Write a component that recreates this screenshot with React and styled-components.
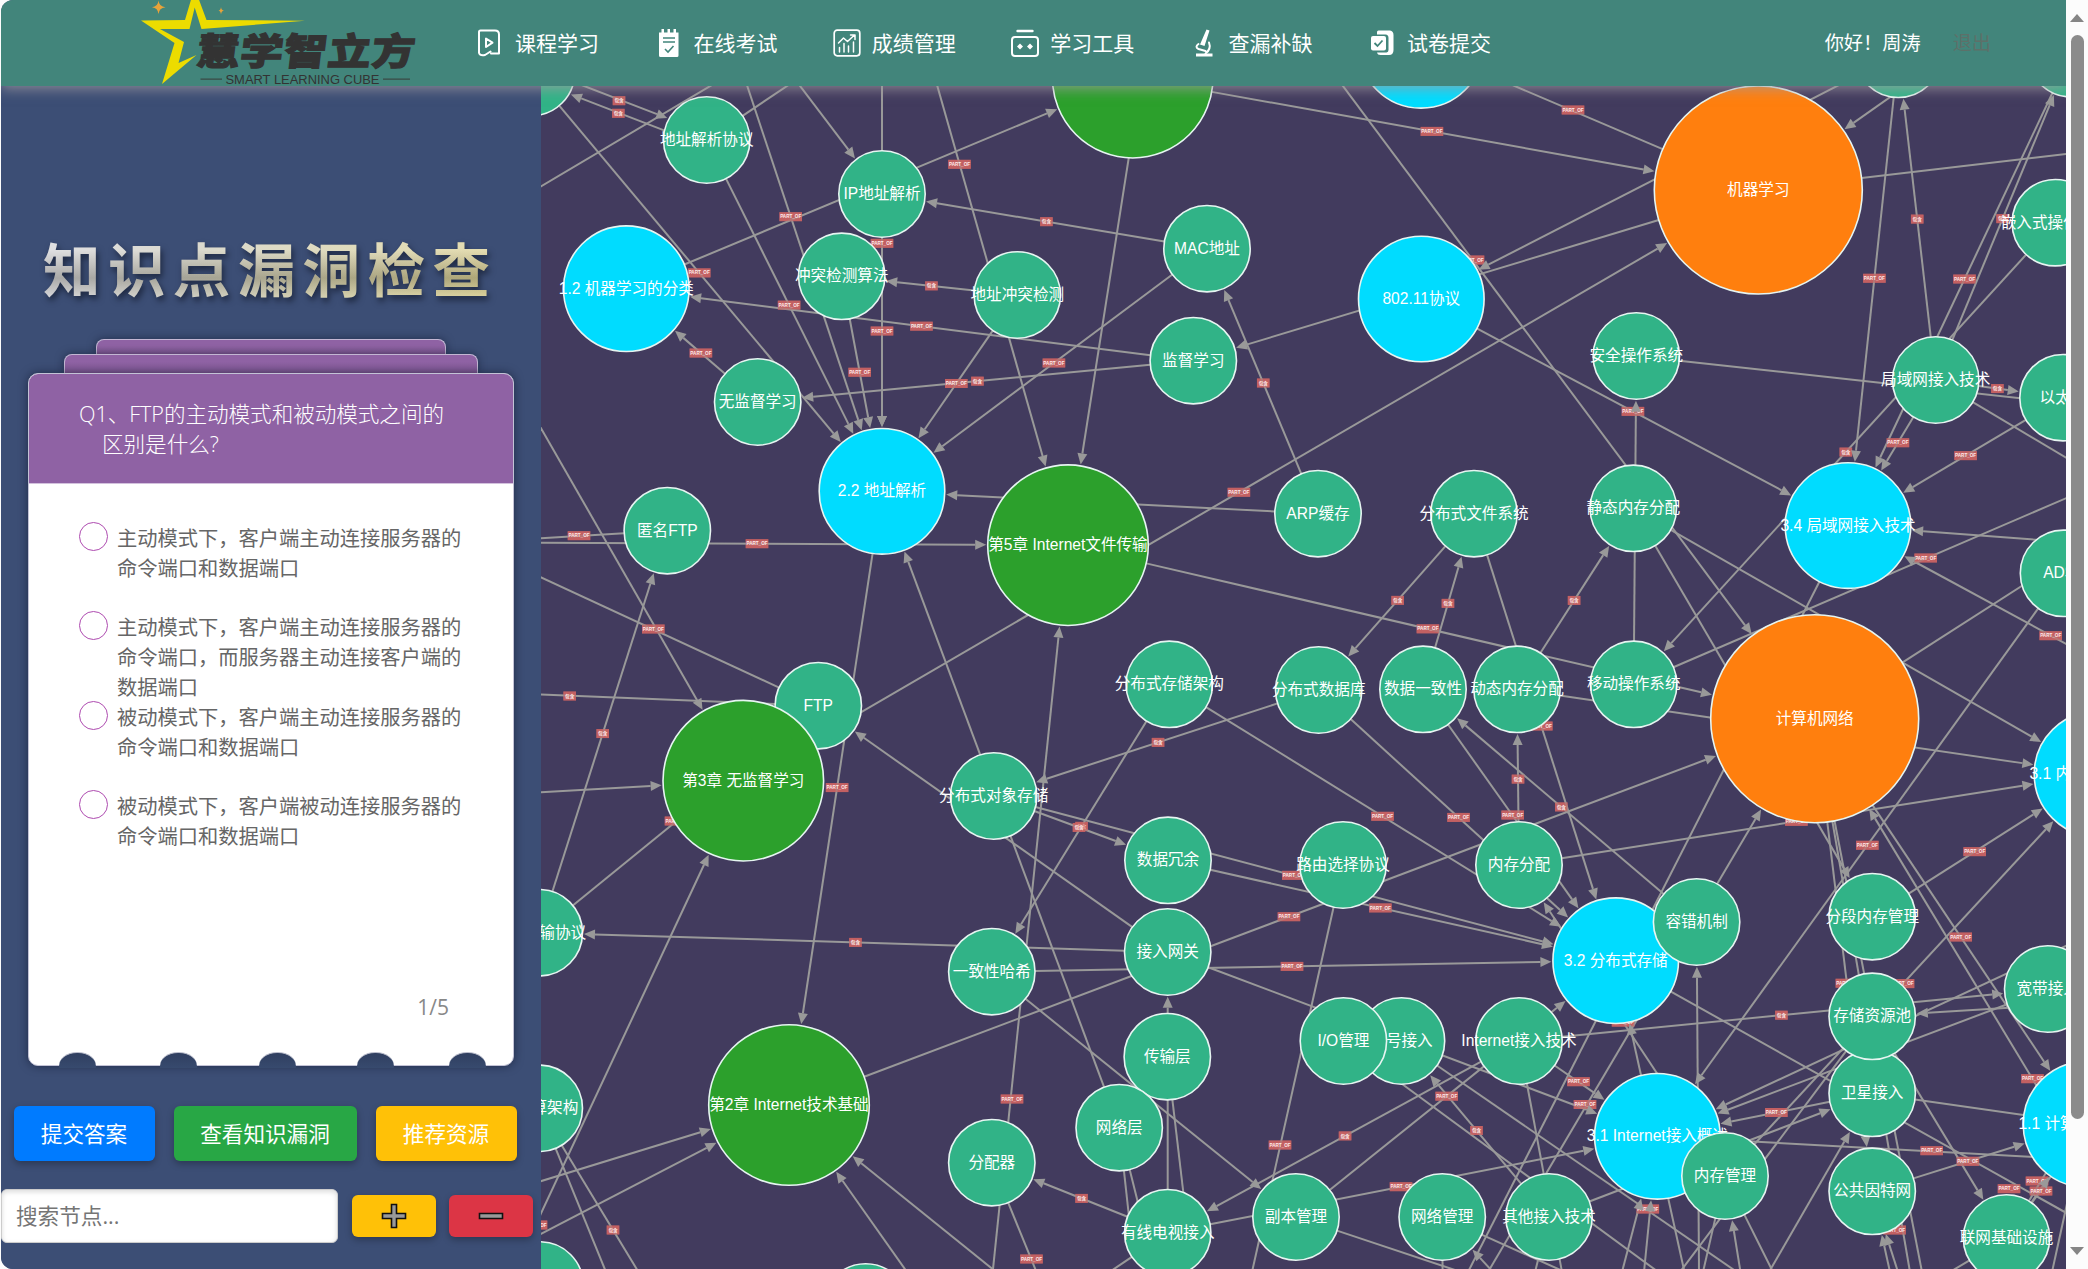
import React from 'react';
import styled, { createGlobalStyle } from 'styled-components';

const SANS = '"Open Sans", "Noto Sans CJK SC", sans-serif';
const GRAPH_FONT = '"Liberation Sans", "Noto Sans CJK SC", sans-serif';

const Global = createGlobalStyle`
  * { box-sizing: border-box; }
  html, body { margin: 0; padding: 0; background: #fcfcfc; overflow: hidden; }
  body { font-family: ${SANS}; }
`;

const Page = styled.div`
  display: flex;
  width: 2088px;
  height: 1269px;
  padding-left: 1px;
  background: #fcfcfc;
`;

const Shell = styled.div`
  display: flex;
  flex-direction: column;
  width: 2065px;
  height: 1269px;
  border-radius: 12px 0 0 12px;
  overflow: hidden;
  background: #3c4e75;
`;

/* ---------- header ---------- */

const Header = styled.header`
  position: relative;
  z-index: 2;
  display: flex;
  align-items: center;
  flex: none;
  height: 86px;
  padding-right: 75px;
  background: #42857b;
  box-shadow: 0 3px 12px rgba(160, 155, 160, 0.75);
`;

const LogoArt = styled.svg`
  display: block;
  flex: none;
  width: 285px;
  height: 86px;
  margin-left: 139px;
`;

const Nav = styled.nav`
  display: flex;
  align-items: center;
  gap: 55.4px;
  margin-left: 51px;
  flex: 1;
`;

const NavItem = styled.a`
  display: flex;
  align-items: center;
  gap: 11px;
  width: 123px;
  color: #fff;
  font-size: 21px;
  line-height: 30px;
  white-space: nowrap;

  svg { display: block; flex: none; width: 28px; height: 28px; }
`;

const Account = styled.div`
  display: flex;
  gap: 32px;
  font-size: 19.2px;
  line-height: 30px;
  color: #fff;
`;

const Logout = styled.span`
  color: #5d7069;
`;

/* ---------- layout ---------- */

const Body = styled.div`
  display: flex;
  flex: 1;
  min-height: 0;
`;

const Side = styled.aside`
  display: flex;
  flex-direction: column;
  flex: none;
  width: 540px;
  background: #3c4e75;
`;

const Title = styled.h1`
  margin: 144px 0 0 42px;
  height: 80px;
  font-size: 57.5px;
  line-height: 80px;
  font-weight: 700;
  letter-spacing: 7.4px;
  white-space: nowrap;
  color: transparent;
  background:
    linear-gradient(180deg, rgba(255,255,255,.3) 25%, rgba(80,78,68,.3) 60%, rgba(255,255,255,.15) 85%),
    linear-gradient(90deg, #d2d2d6 0%, #cbc9ba 30%, #d2cca2 60%, #dacd86 100%);
  -webkit-background-clip: text;
  background-clip: text;
  filter: drop-shadow(2px 4px 3px rgba(10, 15, 30, 0.6));
`;

const Deck = styled.div`
  display: flex;
  flex-direction: column;
  align-items: center;
  width: 486px;
  margin: 29px 0 0 27px;
`;

const BackCard = styled.div`
  width: ${(p) => p.$w}px;
  height: ${(p) => p.$h}px;
  background: linear-gradient(#8f62a4 40%, #7f5893);
  border: 1px solid #c3b6d3;
  border-bottom: 0;
  border-radius: 8px 8px 0 0;
  box-shadow: 0 0 9px rgba(10, 15, 35, 0.5);
`;

const Card = styled.section`
  display: flex;
  flex-direction: column;
  width: 486px;
  height: 693px;
  border: 1px solid #c3c3d6;
  border-radius: 10px;
  background: #fff;
  box-shadow: 0 0 10px rgba(10, 15, 35, 0.55);
  position: relative;
`;

const Question = styled.div`
  flex: none;
  height: 110px;
  padding: 25px 20px 0 73px;
  background: #8f62a4;
  border-bottom: 1px solid #d3c1dd;
  border-radius: 9px 9px 0 0;
  color: #fff;
  font-size: 21.6px;
  line-height: 30px;
  font-weight: 300;
  text-indent: -23px;
  white-space: pre-line;
  letter-spacing: -0.05px;
`;

const Options = styled.div`
  display: flex;
  flex-direction: column;
  padding: 38px 0 0 50px;
`;

const Option = styled.label`
  display: flex;
  gap: 9px;
  height: 89.3px;
  color: #666;
  font-size: 20.25px;
  line-height: 30px;
`;

const Radio = styled.i`
  flex: none;
  width: 29px;
  height: 29px;
  border: 1.4px solid #ae4bb0;
  border-radius: 50%;
`;

const OptionText = styled.span`
  width: 346px;
  padding-top: 1px;
  white-space: pre;
`;

const Pager = styled.div`
  margin: 113px 64px 0 0;
  text-align: right;
  font-size: 21px;
  line-height: 30px;
  color: #888;
`;

const Notches = styled.div`
  position: absolute;
  left: 30px;
  bottom: -3px;
  display: flex;
`;

const Notch = styled.i`
  width: 37px;
  height: 16px;
  margin-right: ${(p) => p.$gap}px;
  border-radius: 18px 18px 0 0 / 14px 14px 0 0;
  border-top: 1px solid #b9bccb;
  background: linear-gradient(#303f60, #374a6e);
`;

const Actions = styled.div`
  display: flex;
  gap: 19px;
  margin: 40px 0 0 12.5px;
`;

const ActionButton = styled.button`
  width: ${(p) => p.$w}px;
  height: 55px;
  padding: 0;
  border: 0;
  border-radius: 6px;
  background: ${(p) => p.$bg};
  color: #fff;
  font: 400 21.6px/30px ${SANS};
  white-space: nowrap;
  box-shadow: 0 3px 7px rgba(0, 0, 0, 0.28);
`;

const SearchRow = styled.div`
  display: flex;
  align-items: center;
  margin-top: 28px;
  height: 54px;
`;

const SearchInput = styled.input`
  width: 337px;
  height: 54px;
  padding: 0 14px 2px;
  border: 1px solid #ccc;
  border-radius: 6px;
  background: #fff;
  box-shadow: inset 0 2px 5px rgba(0, 0, 0, 0.14);
  font: 400 21.6px/30px ${SANS};
  color: #333;
  &::placeholder { color: #757575; opacity: 1; }
`;

const ZoomButton = styled.button`
  display: flex;
  align-items: center;
  justify-content: center;
  width: 84px;
  height: 42px;
  margin-left: ${(p) => p.$ml}px;
  padding: 0;
  border: 0;
  border-radius: 6px;
  background: ${(p) => p.$bg};
  box-shadow: 0 3px 7px rgba(0, 0, 0, 0.28);
`;

const GraphArea = styled.main`
  flex: 1;
  overflow: hidden;
  background: #423b5e;
`;

const GraphSvg = styled.svg`
  display: block;
  width: 1525px;
  height: 1183px;
  font-family: ${GRAPH_FONT};
`;

/* ---------- scrollbar ---------- */

const ScrollTrack = styled.div`
  display: flex;
  flex-direction: column;
  align-items: center;
  width: 22px;
  height: 1269px;
  padding: 14px 0 14px;
  background: #fcfcfc;
`;

const ScrollArrow = styled.i`
  border: 7px solid transparent;
  border-top-width: ${(p) => (p.$up ? 0 : 8)}px;
  border-bottom-width: ${(p) => (p.$up ? 8 : 0)}px;
  border-${(p) => (p.$up ? 'bottom' : 'top')}-color: #858585;
`;

const ScrollThumb = styled.i`
  width: 13px;
  height: 1084px;
  margin: 13px 0 auto;
  border-radius: 7px;
  background: #8b8b8b;
`;

/* ---------- graph data ---------- */

const S = 43.2, C = 62.8, G = 80.3, O = 104;
const TEAL = '#31b387', CYAN = '#00dcff', GREEN = '#2ca02c', ORANGE = '#ff7f0e';
const FILL = { [S]: TEAL, [C]: CYAN, [G]: GREEN, [O]: ORANGE };

const nodes = {
  tl: [531.5, 72.5, S, ''],
  arpProto: [706.7, 140, S, '地址解析协议'],
  ipRes: [882, 194, S, 'IP地址解析'],
  c12: [626.3, 288.7, C, '1.2 机器学习的分类'],
  clashAlgo: [841.7, 276.3, S, '冲突检测算法'],
  clash: [1017.3, 295, S, '地址冲突检测'],
  unsup: [757.7, 402, S, '无监督学习'],
  c22: [882, 491.3, C, '2.2 地址解析'],
  anonFtp: [667.3, 530.7, S, '匿名FTP'],
  ftp: [818.3, 705.7, S, 'FTP'],
  ch3: [743.3, 780.7, G, '第3章 无监督学习'],
  objStore: [993.7, 796, S, '分布式对象存储'],
  ch5: [1068, 545.2, G, '第5章 Internet文件传输'],
  chTop: [1132.7, 77.7, G, ''],
  mac: [1207, 248.7, S, 'MAC地址'],
  sup: [1193.3, 360.7, S, '监督学习'],
  w80211: [1421.3, 299, C, '802.11协议'],
  cTop: [1421, 45.3, C, ''],
  ml: [1758.3, 190, O, '机器学习'],
  sTop: [1898.3, 54.3, S, ''],
  tr: [2071, 53.7, S, ''],
  embedOs: [2055.3, 222.7, S, '嵌入式操作系统'],
  safeOs: [1636.3, 356, S, '安全操作系统'],
  lan: [1935.7, 380, S, '局域网接入技术'],
  ether: [2063, 397.7, S, '以太网'],
  c34: [1848, 525.6, C, '3.4 局域网接入技术'],
  arp: [1318, 513.7, S, 'ARP缓存'],
  dfs: [1474, 513.7, S, '分布式文件系统'],
  dArch: [1169.3, 684.3, S, '分布式存储架构'],
  ddb: [1318.7, 690, S, '分布式数据库'],
  consist: [1423, 689.3, S, '数据一致性'],
  dynMem: [1517, 689.3, S, '动态内存分配'],
  redund: [1168, 860.3, S, '数据冗余'],
  route: [1343, 865, S, '路由选择协议'],
  memAlloc: [1519, 865, S, '内存分配'],
  staMem: [1633.3, 508.3, S, '静态内存分配'],
  mobOs: [1633.7, 684.3, S, '移动操作系统'],
  net: [1814.7, 718.7, O, '计算机网络'],
  adsl: [2063.5, 573.3, S, 'ADSL'],
  c31m: [2097, 774, C, '3.1 内存管理的概念'],
  ftProto: [539.3, 932.7, S, '文件传输协议'],
  cloudArch: [539.3, 1108.3, S, '云计算架构'],
  bl: [540, 1285, S, ''],
  ch2: [789, 1105, G, '第2章 Internet技术基础'],
  bs: [865.7, 1307, S, ''],
  hash: [991.8, 971.7, S, '一致性哈希'],
  gateway: [1167.7, 952, S, '接入网关'],
  transport: [1167.3, 1056.7, S, '传输层'],
  netLayer: [1119.2, 1127.7, S, '网络层'],
  splitter: [991.8, 1162.7, S, '分配器'],
  cable: [1167.7, 1232.7, S, '有线电视接入'],
  replica: [1296, 1217, S, '副本管理'],
  netMgr: [1442.2, 1217, S, '网络管理'],
  other: [1549, 1217, S, '其他接入技术'],
  c32: [1615.7, 960.7, C, '3.2 分布式存储'],
  fault: [1696.6, 922, S, '容错机制'],
  c31i: [1657.4, 1136.3, C, '3.1 Internet接入概述'],
  memMgr: [1725, 1176, S, '内存管理'],
  dial: [1401.5, 1041, S, '拨号接入'],
  io: [1343.4, 1041, S, 'I/O管理'],
  inetAcc: [1519, 1041, S, 'Internet接入技术'],
  segMem: [1872.2, 916.7, S, '分段内存管理'],
  sat: [1872.2, 1093.3, S, '卫星接入'],
  pool: [1872.2, 1016.3, S, '存储资源池'],
  pubNet: [1872.2, 1191.3, S, '公共因特网'],
  broad: [2047.7, 989, S, '宽带接入'],
  infra: [2006.5, 1238, S, '联网基础设施'],
  c11: [2086, 1124.3, C, '1.1 计算机网络概述'],
};
/* chapter 3 sits above the FTP node */
const order = Object.keys(nodes).filter((k) => k !== 'ch3');
order.splice(order.indexOf('ftp') + 1, 0, 'ch3');

const P = 'PART_OF';
const R = '包含';

/* [from, to, label, label position, bend] – a bare [x, y] end lies outside the visible nodes */
const edges = [
  ['tl', 'arpProto', R, [619, 100.7], -10],
  ['arpProto', 'tl', R, [618.3, 113.3], -10],
  [[540, 187], [712, 85]],
  ['arpProto', [790, 84]],
  [[699.4, -58], 'c22', P, [790.7, 216.7]],
  [[750, 20], 'ipRes'],
  [[882, 0], 'c22', P, [882, 243.3]],
  ['ipRes', 'c22', P, [882, 331]],
  [[910, -10], 'ch5', P, [959.5, 164.3]],
  ['mac', 'ipRes', R],
  ['tl', 'c22', P],
  ['arpProto', 'c22', P],
  ['clashAlgo', 'c22', P],
  ['clash', 'clashAlgo', R],
  ['clash', 'c22', P],
  ['c12', 'chTop'],
  ['sup', 'c12', P],
  ['unsup', 'c12', P],
  ['sup', 'unsup', R],
  ['mac', 'c22', P],
  [[538, 423], 'ch3'],
  ['chTop', 'ml', P],
  [[1153.5, 0], 'ch5'],
  ['ml', 'sup'],
  [[1880, 64], 'w80211'],
  [[1290, 15], 'net', P, [1473, 260]],
  ['w80211', 'c34', P],
  ['ch3', 'ml', P],
  ['arp', 'mac', R],
  ['arp', 'c22'],
  ['ml', [1510, 84], P, [1573, 110]],
  [[1960, 47.8], 'ml'],
  ['sTop', 'c34', P],
  ['lan', 'sTop', R],
  ['lan', 'tr', R],
  ['tr', 'c34', P],
  ['lan', 'c34', P],
  ['embedOs', 'mobOs', R],
  ['lan', 'ether', R],
  ['safeOs', [2110, 408]],
  ['lan', [2070, 460]],
  ['ether', 'c34', P],
  ['ml', [2070, 153.6]],
  ['mobOs', 'safeOs'],
  ['staMem', 'segMem'],
  ['staMem', 'c31m'],
  [[2120, 546], 'c34'],
  [[2070, 646], 'c34', P, [2050.7, 635.7]],
  ['mobOs', [2070, 496.5], P, [1925.7, 558]],
  ['c34', [1468, 1272]],
  ['net', [2070, 555]],
  ['adsl', 'c31i', P],
  ['dynMem', 'c31m'],
  ['memAlloc', 'c31m', P],
  ['ch2', 'net', P],
  ['fault', 'consist', R],
  ['dfs', 'c32', P],
  [[1488, 1272], 'net'],
  ['net', 'pubNet', P],
  ['net', [1910, 1272]],
  ['net', [1922, 1272]],
  ['net', 'c11', P],
  [[2110, 1207], 'net', P, [2032.5, 1078.7]],
  ['segMem', 'c31m', P],
  ['memMgr', 'c31m', P],
  ['anonFtp', [538, 538.5], P, [579, 535.7]],
  [[300, 541.5], 'ch5', P, [757, 543.7]],
  ['ftp', [538, 694.5], R, [569.7, 696]],
  ['ftp', [538, 576], P, [653.3, 629]],
  ['ftProto', 'anonFtp', R],
  [[538, 792.4], 'ch3'],
  [[530, 1237], 'ch3'],
  ['ftProto', 'ftp', P, [676, 821]],
  ['c22', 'ch2', P],
  ['netLayer', 'c22'],
  ['netLayer', [1141, 1215]],
  ['netLayer', [1131, 1235]],
  ['cable', 'gateway'],
  ['transport', [1186, 1215]],
  ['gateway', 'ftp'],
  ['dArch', 'hash', R],
  [[992.5, 1274], 'ch5', P, [1012, 1099]],
  ['ddb', 'objStore', R],
  ['objStore', 'redund', R],
  ['objStore', 'c32', P],
  ['redund', 'c32', P],
  ['hash', 'c32', P],
  ['dArch', 'c32', P],
  ['ddb', 'c32', P],
  ['consist', 'c32', P, [1512.7, 815]],
  ['memAlloc', 'dynMem', R],
  ['dynMem', 'staMem', R],
  ['consist', 'dfs', R],
  ['dfs', 'ddb', R],
  ['ch5', 'net', P],
  ['memMgr', 'memAlloc', P],
  [[1684.5, 1272], 'c32'],
  ['c32', [2070, 1215]],
  [[1699, 1272], 'fault'],
  ['replica', 'c32', P],
  ['inetAcc', 'broad', R],
  [[2070, 1004], 'pool'],
  ['broad', 'c31i'],
  [[2070, 944], 'c31i'],
  ['sat', 'c31i', P],
  ['other', 'sat'],
  ['cable', 'c31i', P, [1401, 1186.7]],
  ['inetAcc', 'cable', R],
  ['inetAcc', 'c31i', P, [1578.5, 1081.7]],
  ['gateway', 'c31i', P, [1585, 1104.5]],
  ['gateway', 'ftProto', R],
  ['other', 'dial', R],
  ['io', [1661, 1274]],
  ['dial', [1737, 1272]],
  ['hash', 'replica'],
  ['route', [1252, 1272], P, [1280, 1145]],
  ['cable', 'splitter', R],
  [[995, 1271], 'ch2'],
  [[907, 1272], 'ch2'],
  [[538, 1182], 'ch2'],
  [[538, 1235.5], 'ch2', P, [536, 1225]],
  ['cloudArch', [638.5, 1272], R, [613, 1230]],
  ['cloudArch', [606, 1272]],
  ['splitter', [1036.5, 1272], P, [1031.5, 1259]],
  ['cable', [1111, 1271]],
  ['replica', [1461, 1272]],
  ['netMgr', [1442.6, 1272]],
  ['netMgr', [1565, 1272]],
  [[1493, 1272], 'netMgr'],
  ['inetAcc', [1562, 1272]],
  ['other', [1535, 1272]],
  [[1622, 1272], 'c31i', P, [1647.8, 1209]],
  [[1644, 1272], 'c31i'],
  [[1740.5, 1272], 'memMgr'],
  ['memMgr', [1703, 1272]],
  ['memMgr', [1773, 1272]],
  [[1769, 1272], 'sat'],
  ['pool', [1680, 1272]],
  ['pool', 'infra', P, [2009, 1188.7]],
  ['c31i', [2070, 1159], P, [1931.7, 1150.7]],
  ['sat', [2086, 1124]],
  ['pubNet', 'c11', P],
  [[1890, 1272], 'pubNet', P, [1894.6, 1230]],
  [[1898, 1272], 'pubNet'],
  ['infra', 'c11', P, [2037, 1181]],
  ['infra', [2070, 1150], P, [2041, 1191]],
  ['infra', [2070, 1133]],
  [[2052, 1272], [2070, 1190]],
  ['infra', [1950, 1272]],
];

const ARROW = 11;

function layoutEdge([from, to, label, labelAt, bend = 0]) {
  const a = Array.isArray(from) ? [from[0], from[1], 0] : nodes[from];
  const b = Array.isArray(to) ? [to[0], to[1], 0] : nodes[to];
  const dx = b[0] - a[0];
  const dy = b[1] - a[1];
  const len = Math.hypot(dx, dy);
  const ux = dx / len;
  const uy = dy / len;
  const off = bend ? 6.3 : 0;
  const nx = uy * off;
  const ny = -ux * off;
  const endR = b[2] ? b[2] + 1.5 : 0;
  const sx = a[0] + ux * a[2] + nx;
  const sy = a[1] + uy * a[2] + ny;
  const ex = b[0] - ux * endR + nx;
  const ey = b[1] - uy * endR + ny;
  const bx = ex - ux * ARROW;
  const by = ey - uy * ARROW;
  return {
    sx, sy,
    ex: b[2] ? bx : ex,
    ey: b[2] ? by : ey,
    head: b[2]
      ? `${ex},${ey} ${bx - uy * 5},${by + ux * 5} ${bx + uy * 5},${by - ux * 5}`
      : null,
    label,
    lx: labelAt ? labelAt[0] : (sx + ex) / 2 + ux * -1.2,
    ly: labelAt ? labelAt[1] : (sy + ey) / 2 + uy * -1.2,
  };
}

function Graph() {
  const laid = edges.map(layoutEdge);
  return (
    <GraphSvg viewBox="541 86 1525 1183">
      <g>
        {laid.filter((e) => e.label).map((e, i) => {
          const w = e.label === P ? 22.6 : 12.6;
          return (
            <rect key={i} x={e.lx - w / 2} y={e.ly - 4.5} width={w} height="9" fill="#ba6067" />
          );
        })}
      </g>
      <g stroke="#999" strokeWidth="2">
        {laid.map((e, i) => (
          <line key={i} x1={e.sx} y1={e.sy} x2={e.ex} y2={e.ey} />
        ))}
      </g>
      <g>
        {laid.filter((e) => e.label).map((e, i) => {
          const w = e.label === P ? 22.6 : 12.6;
          return (
            <g key={i}>
              <rect x={e.lx - w / 2} y={e.ly - 4.5} width={w} height="9" fill="#c9605f" fillOpacity="0.6" />
              <text x={e.lx} y={e.ly + 1.6} textAnchor="middle" fontSize="4.6" fontWeight="700" fill="#ffe9e9">
                {e.label}
              </text>
            </g>
          );
        })}
      </g>
      <g fill="#999">
        {laid.filter((e) => e.head).map((e, i) => (
          <polygon key={i} points={e.head} />
        ))}
      </g>
      {order.map((k) => {
        const [x, y, r, name] = nodes[k];
        return (
          <g key={k}>
            <circle cx={x} cy={y} r={r} fill={FILL[r]} stroke="#e6f5f1" strokeWidth="1.6" />
            {name && <text x={x} y={y + 5} textAnchor="middle" fontSize="15.6" fill="#fff">{name}</text>}
          </g>
        );
      })}
    </GraphSvg>
  );
}

/* ---------- drawings ---------- */

function Logo() {
  return (
    <LogoArt viewBox="140 0 285 86">
      <path
        fill="#ecdc00"
        d="M141 20.5 L185 20 L193 -7 H196.5 L206.5 20 L305 20.7 L201.5 29 L194.7 7.5 L189.5 29 H160 L184 42 L178.5 63 L196.5 55 L162 84 L174.5 43 Z"
      />
      <path fill="#e8a33a" d="M158.5 0.5 Q159 6.500 165.500 7.200 Q159 8 158.500 14 Q158 8 152 7.200 Q158 6.500 158.500 0.500Z" />
      <path fill="#e8a33a" d="M221 7 Q221.300 10.400 224 10.700 Q221.300 11 221 14.500 Q220.700 11 218.500 10.700 Q220.700 10.400 221 7Z" />
      <text
        transform="translate(195 64.800) skewX(-7) scale(1.04 0.9)"
        fontFamily="Noto Sans CJK SC, sans-serif"
        fontWeight="900"
        fontSize="41.500"
        textLength="210"
        lengthAdjust="spacing"
        fill="#333"
        stroke="#333"
        strokeWidth="1.2"
      >
        慧学智立方
      </text>
      <path d="M200.500 79.200H222M383 79.200H410" stroke="#3a4a46" strokeWidth="1.300" />
      <text x="225.500" y="83.700" fontFamily="Liberation Sans, sans-serif" fontSize="13.600" textLength="154" lengthAdjust="spacingAndGlyphs" fill="#333">
        SMART LEARNING CUBE
      </text>
    </LogoArt>
  );
}

const line = { fill: 'none', stroke: '#fff', strokeWidth: 2, strokeLinejoin: 'round', strokeLinecap: 'round' };

const icons = {
  course: (
    <svg viewBox="0 0 28 28">
      <path {...line} d="M3 24V3Q3 1.500 4.500 1.500H19Q23 1.500 23 5.500V24.500H15M3 24Q4 27 9 26L14.500 22.500" />
      <path {...line} d="M10 9.500V18L16.500 13.700Z" />
    </svg>
  ),
  exam: (
    <svg viewBox="0 0 28 28">
      <path fill="#fff" d="M5 3.500H7.500V0H10V3.500H13.500V0H16V3.500H19.500V0H22V3.500H24.500V26.500Q24.500 28 23 28H6.500Q5 28 5 26.500Z" />
      <path fill="none" stroke="#42857b" strokeWidth="1.600" d="M9 9H21M9 13H21M11 20L14 23L19.500 17" />
    </svg>
  ),
  score: (
    <svg viewBox="0 0 28 28">
      <rect {...line} strokeWidth="1.700" x="1.200" y="1.200" width="25.600" height="25.600" rx="3" />
      <path {...line} strokeWidth="1.500" d="M5.500 14L10.500 9L14.500 12.500L21.500 6M17.500 6H22V10.500M6.500 23V18.500M11 23V14.500M15.500 23V17M20.500 23V13" />
    </svg>
  ),
  tools: (
    <svg viewBox="0 0 28 28">
      <rect {...line} x="1" y="8" width="26" height="19" rx="3" />
      <path {...line} strokeWidth="2.400" d="M6.500 2H21.500" />
      <path fill="#fff" d="M9 14.500l3 3-3 3-3-3zM19 14.500l3 3-3 3-3-3z" />
    </svg>
  ),
  micro: (
    <svg viewBox="0 0 28 28">
      <path fill="#fff" d="M16.500 0.500L19.500 1.500L14.500 17L10 15.500Z M6 24.500H22.500V27.500H6Z" />
      <path {...line} d="M8.500 15Q4.500 18 8.500 20L15.500 22M19 13.500Q21.500 20 15.500 24.500" />
    </svg>
  ),
  submit: (
    <svg viewBox="0 0 28 28">
      <path fill="#fff" d="M9 3Q9 1.500 10.500 1.500H22Q25.500 2 25.500 6V21Q25.500 26 21 26H12.500Q9.500 26 9 23.500H18.500Q20.500 23 20.500 21V9Q20.500 5.500 17.500 5.500H9Z" />
      <rect x="3" y="7" width="15" height="14.500" rx="2" fill="#fff" />
      <path fill="none" stroke="#42857b" strokeWidth="1.800" d="M6.500 14L9.500 17L14.500 11.500" />
    </svg>
  ),
};

const navItems = [
  ['course', '课程学习'],
  ['exam', '在线考试'],
  ['score', '成绩管理'],
  ['tools', '学习工具'],
  ['micro', '查漏补缺'],
  ['submit', '试卷提交'],
];

const options = [
  '主动模式下，客户端主动连接服务器的\n命令端口和数据端口',
  '主动模式下，客户端主动连接服务器的\n命令端口，而服务器主动连接客户端的\n数据端口',
  '被动模式下，客户端主动连接服务器的\n命令端口和数据端口',
  '被动模式下，客户端被动连接服务器的\n命令端口和数据端口',
];

const notchGaps = [64, 61.5, 61.5, 55, 0];

export default function App() {
  return (
    <Page>
      <Global />
      <Shell>
        <Header>
          <Logo />
          <Nav>
            {navItems.map(([icon, text]) => (
              <NavItem key={text}>
                {icons[icon]}
                {text}
              </NavItem>
            ))}
          </Nav>
          <Account>
            <span>你好！周涛</span>
            <Logout>退出</Logout>
          </Account>
        </Header>
        <Body>
          <Side>
            <Title>知识点漏洞检查</Title>
            <Deck>
              <BackCard $w={350} $h={15} />
              <BackCard $w={414} $h={19} />
              <Card>
                <Question>{'Q1、FTP的主动模式和被动模式之间的\n区别是什么?'}</Question>
                <Options>
                  {options.map((text) => (
                    <Option key={text}>
                      <Radio />
                      <OptionText>{text}</OptionText>
                    </Option>
                  ))}
                </Options>
                <Pager>1/5</Pager>
                <Notches>
                  {notchGaps.map((gap, i) => (
                    <Notch key={i} $gap={gap} />
                  ))}
                </Notches>
              </Card>
            </Deck>
            <Actions>
              <ActionButton $w={141} $bg="#007bff">提交答案</ActionButton>
              <ActionButton $w={183} $bg="#28a745">查看知识漏洞</ActionButton>
              <ActionButton $w={141} $bg="#ffc107">推荐资源</ActionButton>
            </Actions>
            <SearchRow>
              <SearchInput placeholder="搜索节点..." />
              <ZoomButton $ml={14} $bg="#ffc107">
                <svg width="26" height="26" viewBox="0 0 26 26">
                  <path d="M10.500 1.500h5v9h9v5h-9v9h-5v-9h-9v-5h9z" fill="#999" stroke="#111" strokeWidth="1.600" />
                </svg>
              </ZoomButton>
              <ZoomButton $ml={13} $bg="#dc3545">
                <svg width="26" height="26" viewBox="0 0 26 26">
                  <path d="M1.500 10.500h23v5h-23z" fill="#999" stroke="#111" strokeWidth="1.600" />
                </svg>
              </ZoomButton>
            </SearchRow>
          </Side>
          <GraphArea>
            <Graph />
          </GraphArea>
        </Body>
      </Shell>
      <ScrollTrack>
        <ScrollArrow $up />
        <ScrollThumb />
        <ScrollArrow />
      </ScrollTrack>
    </Page>
  );
}
